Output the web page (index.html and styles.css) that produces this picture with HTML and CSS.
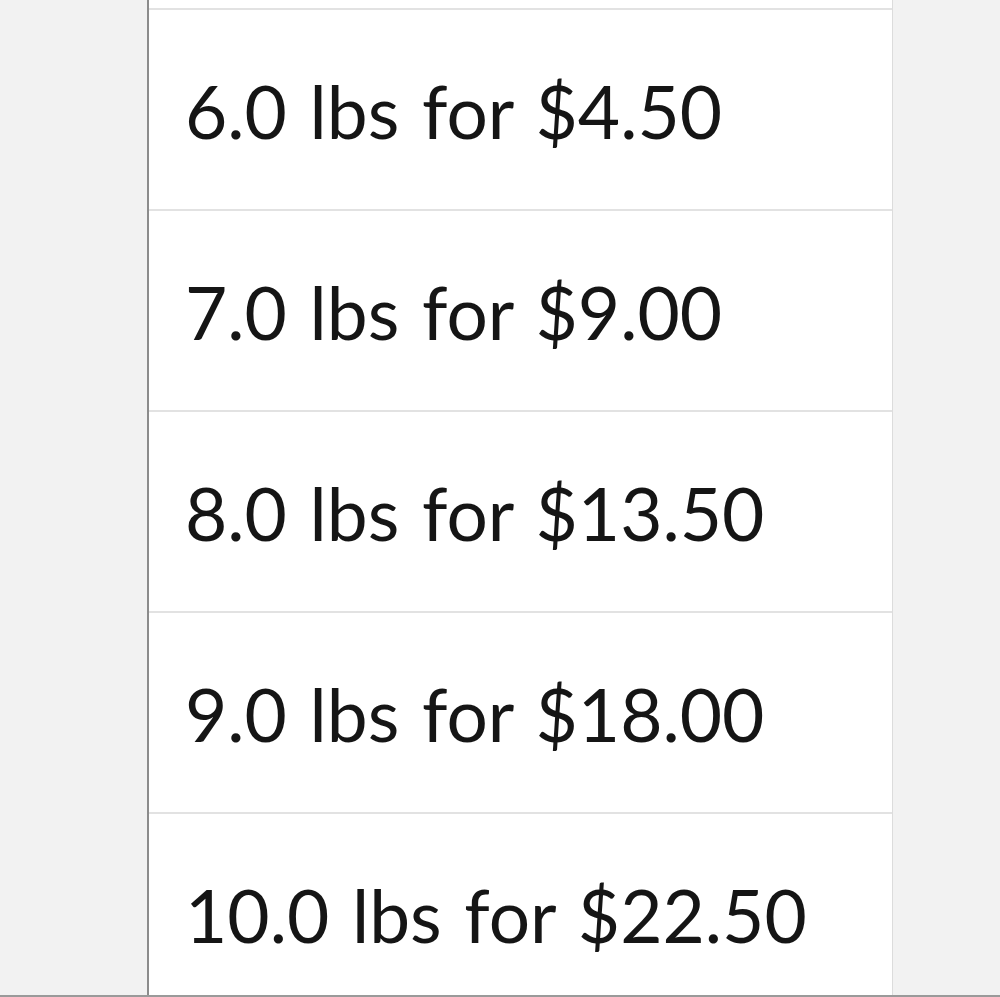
FILE: index.html
```html
<!DOCTYPE html>
<html lang="en">
<head>
  <meta charset="UTF-8">
  <title>Prices</title>
  <meta name="viewport" content="width=device-width, initial-scale=1">
  <link rel="stylesheet" href="styles.css">
</head>
<body>

  <div class="screen">
    <ul class="prices">
      <li class="row row-cut"></li>
      <li class="row">6.0 lbs for $4.50</li>
      <li class="row">7.0 lbs for $9.00</li>
      <li class="row">8.0 lbs for $13.50</li>
      <li class="row">9.0 lbs for $18.00</li>
      <li class="row">10.0 lbs for $22.50</li>
    </ul>
  </div>

</body>
</html>
```

FILE: styles.css
```css
html, body {
  margin: 0;
  padding: 0;
}

body {
  background-color: #f2f2f2;
  font-family: Lato, "Open Sans", sans-serif;
  overflow: hidden;
}

.screen {
  height: 995px;
  overflow: hidden;
  border-bottom: 2px solid #9a9a9a;
}

.prices {
  list-style: none;
  margin: 0 0 0 147px;
  padding: 0;
  width: 743px;
  height: 100%;
  background-color: #fff;
  border-left: 2px solid #8c8c8c;
  border-right: 1px solid #dcdcdc;
}

.row {
  display: flex;
  align-items: center;
  height: 196px;
  padding: 3px 0 0 36px;
  border-top: 2px solid #e2e2e2;
  font-size: 73px;
  word-spacing: 4px;
  color: #151515;
  white-space: nowrap;
}

.row-cut {
  height: 8px;
  padding: 0;
  border-top: none;
}
```
